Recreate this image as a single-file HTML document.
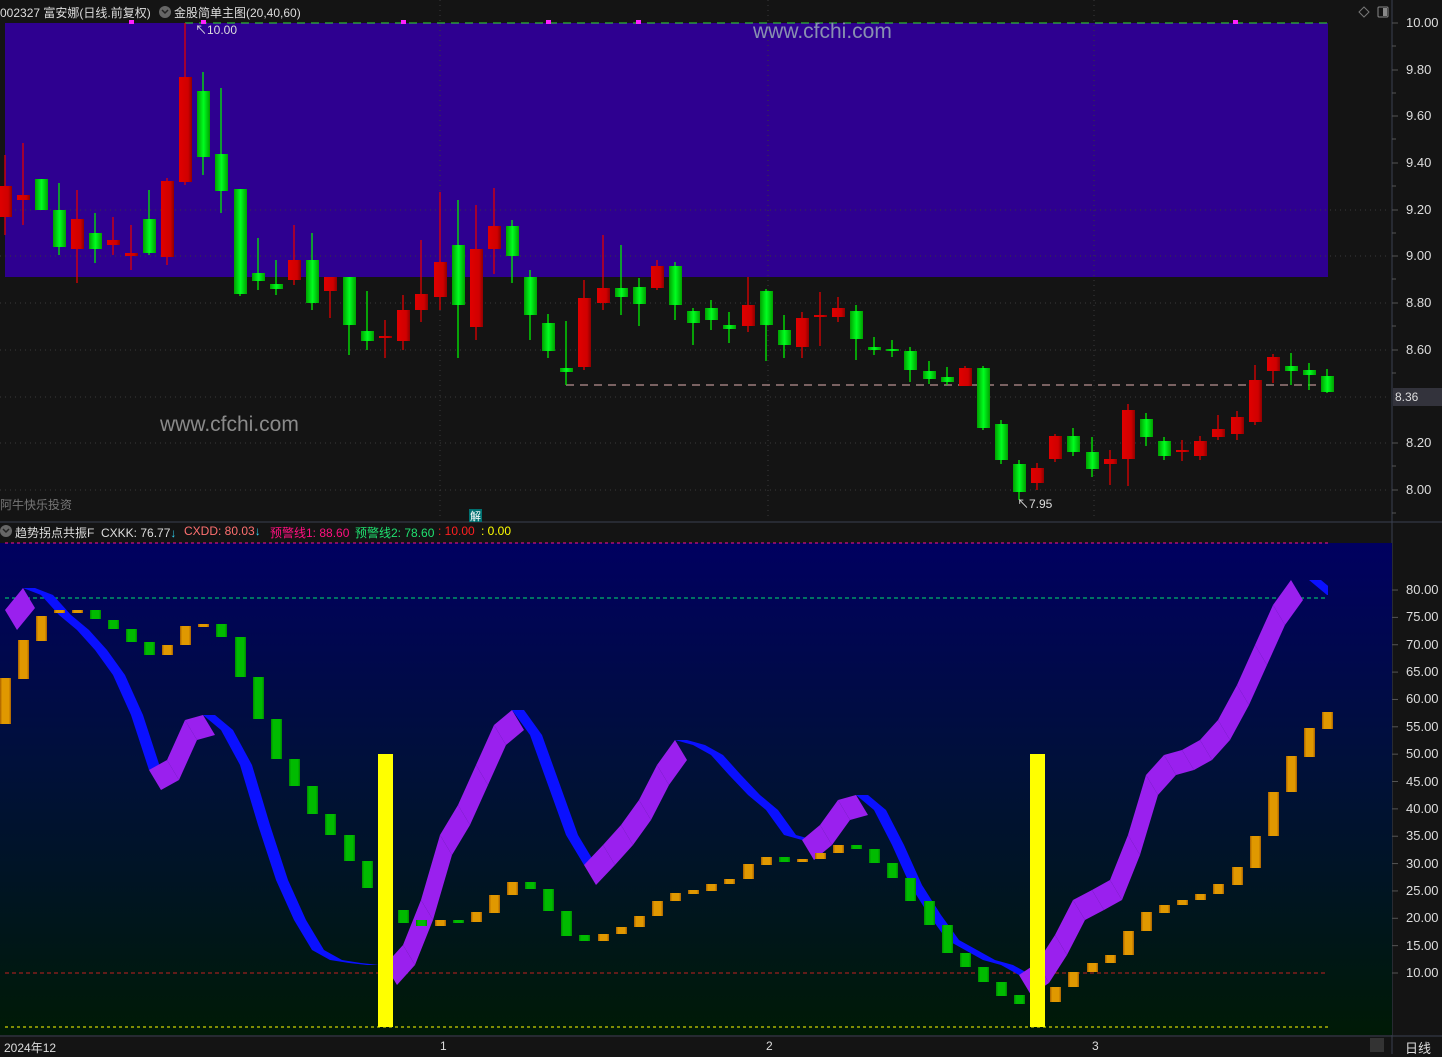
<!DOCTYPE html>
<html><head><meta charset="utf-8"><style>
html,body{margin:0;padding:0;background:#141414;width:1442px;height:1054px;overflow:hidden;font-family:"Liberation Sans","Noto Sans CJK SC",sans-serif}
.t{position:absolute;white-space:nowrap;font-size:12px}
.a{font-size:13px}
</style></head><body>
<svg id="s" width="1442" height="1054" style="position:absolute;left:0;top:0" xmlns="http://www.w3.org/2000/svg">
<defs>
<linearGradient id="bg" x1="0" y1="0" x2="0" y2="1">
<stop offset="0" stop-color="#000060"/><stop offset="0.45" stop-color="#00103a"/><stop offset="1" stop-color="#001a06"/>
</linearGradient>
<linearGradient id="gr" x1="0" x2="1"><stop offset="0" stop-color="#00a000"/><stop offset="0.5" stop-color="#00ff20"/><stop offset="1" stop-color="#00a000"/></linearGradient>
<linearGradient id="rd" x1="0" x2="1"><stop offset="0" stop-color="#e00000"/><stop offset="0.7" stop-color="#d00000"/><stop offset="1" stop-color="#900000"/></linearGradient>
<linearGradient id="or" x1="0" x2="1"><stop offset="0" stop-color="#a86000"/><stop offset="0.2" stop-color="#e09800"/><stop offset="0.8" stop-color="#e09800"/><stop offset="1" stop-color="#a86000"/></linearGradient>
<linearGradient id="gg" x1="0" x2="1"><stop offset="0" stop-color="#008800"/><stop offset="0.2" stop-color="#00bb00"/><stop offset="0.8" stop-color="#00bb00"/><stop offset="1" stop-color="#008800"/></linearGradient>
</defs>
<rect x="0" y="0" width="1442" height="1054" fill="#141414"/>
<rect x="5" y="23" width="1323" height="254" fill="#2e0090"/>
<g id="grid" stroke="#3a3a3a" stroke-dasharray="1,4"></g>
<line x1="1392" y1="0" x2="1392" y2="1054" stroke="#3a4050"/>
<line x1="0" y1="522" x2="1442" y2="522" stroke="#3a4050"/>
<rect x="0" y="543" width="1392" height="492" fill="url(#bg)"/>
<line x1="0" y1="1036" x2="1442" y2="1036" stroke="#3a4050"/>
<line x1="5" y1="543" x2="1328" y2="543" stroke="#ff1090" stroke-dasharray="3,3"/>
<line x1="5" y1="598" x2="1328" y2="598" stroke="#00e070" stroke-dasharray="4,3"/>
<line x1="5" y1="973" x2="1328" y2="973" stroke="#c02020" stroke-dasharray="4,3"/>
<line x1="5" y1="1027" x2="1328" y2="1027" stroke="#ffff00" stroke-dasharray="3,3"/>
<line x1="185" y1="23" x2="1333" y2="23" stroke="#30e030" stroke-dasharray="8,6"/>
<line x1="566" y1="385" x2="1320" y2="385" stroke="#e0b0b0" stroke-dasharray="8,6"/>
<g id="c"></g>
<svg x="0" y="0" width="1328" height="1054" overflow="hidden"><g id="rb"></g></svg>
<g id="br"></g>
<rect x="378" y="754" width="15" height="273" fill="#ffff00"/>
<rect x="1030" y="754" width="15" height="273" fill="#ffff00"/>
<g fill="#ff20ff"><rect x="129" y="20" width="5" height="4"/><rect x="201" y="20" width="5" height="4"/><rect x="401" y="20" width="5" height="4"/><rect x="546" y="20" width="5" height="4"/><rect x="636" y="20" width="5" height="4"/><rect x="1233" y="20" width="5" height="4"/></g>
<g id="ax" stroke="#555"></g>
<rect x="1393" y="388" width="49" height="18" fill="#33333c"/>
<circle cx="165" cy="12" r="6" fill="#666"/><path d="M162 10l3 3 3-3" stroke="#222" fill="none" stroke-width="1.5"/>
<circle cx="6" cy="531" r="6" fill="#666"/><path d="M3 529l3 3 3-3" stroke="#222" fill="none" stroke-width="1.5"/>
<path d="M1364 7l5 5-5 5-5-5z" stroke="#777" fill="none"/>
<rect x="1378" y="7" width="10" height="10" rx="1" stroke="#888" fill="none"/><rect x="1383" y="8" width="4" height="8" fill="#888"/>
<rect x="469" y="509" width="13" height="13" fill="#007070"/>
<rect x="1370" y="1038" width="14" height="14" fill="#333"/>
</svg>
<div class="t" style="left:0;top:4px;color:#ddd">002327 富安娜(日线.前复权)</div>
<div class="t" style="left:174px;top:4px;color:#ddd">金股简单主图(20,40,60)</div>
<div class="t" style="left:195px;top:21px;color:#ddd">↖10.00</div>
<div class="t" style="left:1017px;top:495px;color:#ddd">↖7.95</div>
<div class="t" style="left:753px;top:20px;color:#8890b0;font-size:21px">www.cfchi.com</div>
<div class="t" style="left:160px;top:413px;color:#8a8a8a;font-size:21px">www.cfchi.com</div>
<div class="t" style="left:0;top:496px;color:#777">阿牛快乐投资</div>
<div class="t" style="left:470px;top:508px;color:#fff;font-size:11px">解</div>
<div class="t" style="left:15px;top:524px;color:#ddd">趋势拐点共振F&nbsp; CXKK: 76.77<span style="color:#30d0f0">↓</span></div>
<div class="t" style="left:184px;top:524px;color:#ff7070">CXDD: 80.03<span style="color:#30d0f0">↓</span></div>
<div class="t" style="left:270px;top:524px;color:#ff1080">预警线1: 88.60</div>
<div class="t" style="left:355px;top:524px;color:#20e070">预警线2: 78.60</div>
<div class="t" style="left:438px;top:524px;color:#ff2020">: 10.00</div>
<div class="t" style="left:481px;top:524px;color:#ffff00">: 0.00</div>
<div class="t" style="left:1395px;top:390px;color:#ddd">8.36</div>
<div class="t" style="left:4px;top:1039px;color:#ddd">2024年12</div>
<div class="t" style="left:440px;top:1039px;color:#ddd">1</div>
<div class="t" style="left:766px;top:1039px;color:#ddd">2</div>
<div class="t" style="left:1092px;top:1039px;color:#ddd">3</div>
<div class="t a" style="left:1405px;top:1038px;color:#ddd">日线</div>
<div id="lab"></div>
<script>
var NS="http://www.w3.org/2000/svg";
function el(p,t,a){var e=document.createElementNS(NS,t);for(var k in a)e.setAttribute(k,a[k]);document.getElementById(p).appendChild(e);return e;}
var X=[5,23,41,59,77,95,113,131,149,167,185,203,221,240,258,276,294,312,330,349,367,385,403,421,440,458,476,494,512,530,548,566,584,603,621,639,657,675,693,711,729,748,766,784,802,820,838,856,874,892,910,929,947,965,983,1001,1019,1037,1055,1073,1092,1110,1128,1146,1164,1182,1200,1218,1237,1255,1273,1291,1309,1327];
var C=[[186,217,155,235,'r'],[195,200,143,225,'r'],[179,210,179,210,'g'],[210,247,183,255,'g'],[219,249,190,283,'r'],[233,249,213,263,'g'],[240,245,217,255,'r'],[253,256,225,270,'r'],[219,253,190,255,'g'],[181,257,178,265,'r'],[77,182,23,185,'r'],[91,157,72,175,'g'],[154,191,88,213,'g'],[189,294,189,296,'g'],[273,281,238,290,'g'],[284,289,260,295,'g'],[260,280,225,285,'r'],[260,303,233,310,'g'],[277,291,277,318,'r'],[277,325,277,355,'g'],[331,341,291,350,'g'],[336,338,320,358,'r'],[310,341,295,350,'r'],[294,310,240,322,'r'],[262,297,192,310,'r'],[245,305,200,358,'g'],[249,327,205,340,'r'],[226,249,188,274,'r'],[226,256,220,283,'g'],[277,315,270,340,'g'],[323,351,314,358,'g'],[368,372,321,385,'g'],[298,367,280,370,'r'],[288,303,235,310,'r'],[288,297,245,315,'g'],[287,304,278,326,'g'],[266,288,260,290,'r'],[266,305,262,320,'g'],[311,323,308,345,'g'],[308,320,300,330,'g'],[325,329,312,343,'g'],[305,326,277,332,'r'],[291,325,289,361,'g'],[330,345,315,358,'g'],[318,347,312,358,'r'],[315,317,292,346,'r'],[308,317,297,322,'r'],[311,339,305,360,'g'],[347,350,337,355,'g'],[349,351,340,357,'g'],[351,370,347,382,'g'],[371,379,361,384,'g'],[377,382,367,385,'g'],[368,386,366,386,'r'],[368,428,366,430,'g'],[424,460,420,464,'g'],[464,492,460,500,'g'],[468,483,463,490,'r'],[436,459,434,462,'r'],[436,452,428,456,'g'],[452,469,437,477,'g'],[459,464,450,485,'r'],[410,459,404,486,'r'],[419,437,413,446,'g'],[441,456,437,460,'g'],[450,452,440,461,'r'],[441,456,436,460,'r'],[429,437,415,440,'r'],[417,434,411,440,'r'],[380,422,365,425,'r'],[357,371,354,383,'r'],[366,371,353,385,'g'],[370,375,363,390,'g'],[376,392,369,393,'g']];
C.forEach(function(c,i){var x=X[i],col=c[4]=='r'?'#e00000':'#00ee00';
el('c','line',{x1:x,x2:x,y1:c[2],y2:c[3],stroke:col,'stroke-width':1.3});
el('c','rect',{x:x-6,y:c[0],width:13,height:Math.max(2,c[1]-c[0]),fill:c[4]=='r'?'url(#rd)':'url(#gr)'});});
var B=[[678,724,'o'],[640,679,'o'],[616,641,'o'],[610,612,'o'],[610,611,'o'],[610,619,'g'],[620,629,'g'],[629,642,'g'],[642,655,'g'],[645,655,'o'],[626,645,'o'],[624,626,'o'],[624,637,'g'],[637,677,'g'],[677,719,'g'],[719,759,'g'],[759,786,'g'],[786,814,'g'],[814,835,'g'],[835,861,'g'],[861,888,'g'],null,[910,923,'g'],[920,926,'g'],[920,926,'o'],[920,922,'g'],[912,922,'o'],[895,913,'o'],[882,895,'o'],[882,889,'g'],[889,911,'g'],[911,936,'g'],[935,941,'g'],[934,941,'o'],[927,934,'o'],[916,927,'o'],[901,916,'o'],[893,901,'o'],[890,894,'o'],[884,891,'o'],[879,884,'o'],[864,879,'o'],[857,865,'o'],[857,862,'g'],[859,862,'o'],[853,859,'o'],[845,853,'o'],[845,849,'g'],[849,863,'g'],[863,878,'g'],[878,901,'g'],[901,925,'g'],[925,953,'g'],[953,967,'g'],[967,982,'g'],[982,996,'g'],[995,1004,'g'],null,[987,1002,'o'],[972,987,'o'],[963,972,'o'],[955,963,'o'],[931,955,'o'],[912,931,'o'],[905,913,'o'],[900,905,'o'],[894,900,'o'],[884,894,'o'],[867,885,'o'],[836,868,'o'],[792,836,'o'],[756,792,'o'],[728,757,'o'],[712,729,'o']];
B.forEach(function(b,i){if(!b)return;el('br','rect',{x:X[i]-5,y:b[0],width:11,height:Math.max(3,b[1]-b[0]),fill:b[2]=='o'?'url(#or)':'url(#gg)'});});
var L=[615,593,600,620,635,655,680,720,775,765,725,720,735,770,830,885,925,955,965,968,970,970,950,905,840,810,770,730,715,740,790,840,870,850,830,805,770,745,750,760,780,800,815,840,845,830,805,800,815,850,890,920,945,955,965,970,980,968,940,905,895,885,840,780,760,755,745,725,690,650,610,585,585,600];
for(var i=0;i<L.length-1;i++){var x1=X[i],x2=X[i+1],y1=L[i],y2=L[i+1];var up=y2<y1;var dx=12,dy=up?10:-10;
el('rb','polygon',{points:x1+','+(y1-5)+' '+x2+','+(y2-5)+' '+(x2+dx)+','+(y2+dy+5)+' '+(x1+dx)+','+(y1+dy+5),fill:up?'#9a20ee':'#0a10ff'});}
[303,350,397,443,490,210,256].forEach(function(y){el('grid','line',{x1:0,x2:1390,y1:y,y2:y});});
[440,768,1094].forEach(function(x){el('grid','line',{x1:x,x2:x,y1:0,y2:520});});
var lab=document.getElementById('lab');
function T(x,y,s){var d=document.createElement('div');d.className='t a';d.style.left=x+'px';d.style.top=y+'px';d.style.color='#ddd';d.textContent=s;lab.appendChild(d);}
[['10.00',23],['9.80',70],['9.60',116],['9.40',163],['9.20',210],['9.00',256],['8.80',303],['8.60',350],['8.20',443],['8.00',490]].forEach(function(a){T(1406,a[1]-8,a[0]);el('ax','line',{x1:1392,x2:1398,y1:a[1],y2:a[1]});el('ax','line',{x1:1392,x2:1396,y1:a[1]+23,y2:a[1]+23});});
for(var v=80;v>=10;v-=5){var y=973-(v-10)*5.471;T(1406,y-8,v.toFixed(2));el('ax','line',{x1:1392,x2:1398,y1:y,y2:y});}
</script>
</body></html>
